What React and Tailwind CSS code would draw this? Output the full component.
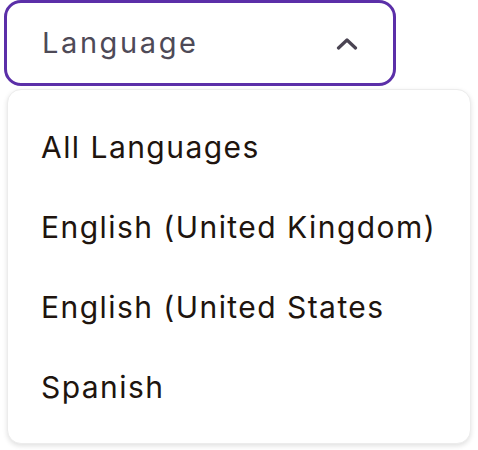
export default function App() {
  const options = [
    "All Languages",
    "English (United Kingdom)",
    "English (United States",
    "Spanish",
  ];

  return (
    <div
      className="w-[478px] h-[450px] bg-white pl-[4px]"
      style={{ fontFamily: "Inter, 'Noto Sans', sans-serif" }}
    >
      {/* Select trigger */}
      <button className="w-[392px] h-[86px] flex items-center justify-between pl-[35px] pr-[35px] border-[3px] border-[#5b2fa8] rounded-[17px] bg-white">
        <span className="text-[29px] text-[#4e4a57] tracking-[2.6px]">Language</span>
        <svg width="22" height="13" viewBox="0 0 22 13" fill="none">
          <polyline
            points="2.5,11 11,3 19.5,11"
            stroke="#4a4452"
            strokeWidth="3.2"
            strokeLinecap="round"
            strokeLinejoin="round"
          />
        </svg>
      </button>

      {/* Options menu */}
      <ul className="ml-[3px] mt-[3px] w-[464px] pt-[17px] pb-[16px] bg-white rounded-[14px] border border-[#ececec] shadow-[0_2px_5px_rgba(0,0,0,0.12)]">
        {options.map((opt) => (
          <li
            key={opt}
            className="h-20 flex items-center px-[33px] text-[30px] tracking-[1.45px] text-[#20140e]"
          >
            {opt}
          </li>
        ))}
      </ul>
    </div>
  );
}
